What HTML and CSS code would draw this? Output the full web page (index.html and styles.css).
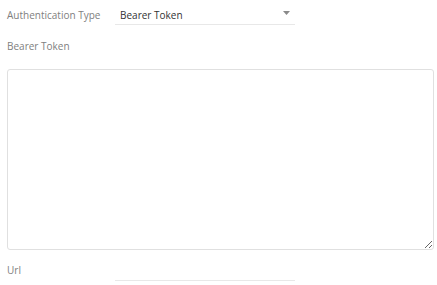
FILE: index.html
```html
<!DOCTYPE html>
<html>
<head>
<meta charset="utf-8">
<link rel="stylesheet" href="styles.css">
</head>
<body>
<div class="form">
  <div class="row">
    <span class="label">Authentication Type</span>
    <div class="select">
      <span class="value">Bearer Token</span>
      <svg class="caret" width="7" height="4" viewBox="0 0 7 4"><path d="M0 0H7L3.5 4Z" fill="#8a8a8a"/></svg>
    </div>
  </div>
  <div class="label block">Bearer Token</div>
  <textarea class="area"></textarea>
  <div class="row url">
    <span class="label">Url</span>
    <div class="input"></div>
  </div>
</div>
</body>
</html>
```
FILE: styles.css
```css
html, body { margin: 0; padding: 0; background: #fff; }
body { font-family: "Open Sans", "Liberation Sans", sans-serif; font-size: 10px; }
.form { display: flex; flex-direction: column; padding: 4px 4px 0 7px; }
.row { display: flex; align-items: center; }
.label { color: #808080; width: 108px; line-height: 14px; }
.select { width: 180px; height: 20px; border-bottom: 1px solid #e8e8e8; display: flex; align-items: center; justify-content: space-between; }
.value { color: #333; padding-left: 5px; line-height: 14px; padding-top: 1px; }
.caret { margin-right: 5px; margin-bottom: 2px; }
.block { margin-top: 14px; }
.area { margin: 16px 0 0 0; width: 427px; height: 181px; box-sizing: border-box; border: 1px solid #e0e0e0; border-radius: 3px; resize: both; font-family: inherit; display: block; }
.url { margin-top: 13px; align-items: flex-start; }
.input { width: 180px; height: 17px; border-bottom: 1px solid #e8e8e8; }
```
